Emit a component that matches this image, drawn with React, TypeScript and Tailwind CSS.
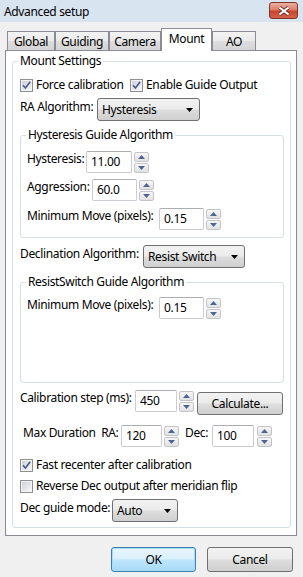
import React from 'react';

const btnBg = 'bg-[linear-gradient(#f2f2f2_0%,#ebebeb_48%,#dddddd_52%,#cfcfcf_100%)]';

const CheckBox: React.FC<{ checked?: boolean }> = ({ checked }) => (
  <svg width="13" height="13" viewBox="0 0 13 13" className="shrink-0">
    <defs>
      <linearGradient id="cbfill" x1="0" y1="0" x2="1" y2="1">
        <stop offset="0" stopColor="#cdd1d7" />
        <stop offset="1" stopColor="#f7f7f8" />
      </linearGradient>
    </defs>
    <rect x="0.5" y="0.5" width="12" height="12" fill="#f4f4f4" stroke="#8e8f8f" />
    <rect x="2" y="2" width="9" height="9" fill="url(#cbfill)" />
    {checked && <path d="M3 6.3 L5.4 9 L10.2 2.8" fill="none" stroke="#4a5d8f" strokeWidth="1.7" />}
  </svg>
);

const SpinBtn: React.FC<{ up?: boolean }> = ({ up }) => (
  <div className="w-[15px] h-[10px] border border-[#c2c4c8] rounded-[2px] bg-linear-to-b from-[#f6f6f6] to-[#e2e2e2] flex items-center justify-center">
    <svg width="7" height="4" viewBox="0 0 7 4">
      <path d={up ? 'M0 4 L3.5 0 L7 4Z' : 'M0 0 L7 0 L3.5 4Z'} fill="#4d6590" />
    </svg>
  </div>
);

const Spin: React.FC<{ className?: string }> = ({ className = '' }) => (
  <div className={`flex flex-col gap-[1px] shrink-0 ${className}`}>
    <SpinBtn up />
    <SpinBtn />
  </div>
);

const Field: React.FC<{ value: string; className: string }> = ({ value, className }) => (
  <div className={`h-[22px] border border-[#c9ccd2] border-t-[#abadb3] rounded-[2px] bg-white flex items-center pl-[4px] shrink-0 ${className}`}>
    {value}
  </div>
);

const Combo: React.FC<{ value: string; className: string }> = ({ value, className }) => (
  <div className={`h-[23px] border border-[#707070] rounded-[3px] ${btnBg} flex items-center pl-[4px] pr-[6px] shrink-0 ${className}`}>
    <span className="flex-1">{value}</span>
    <svg width="7" height="4" viewBox="0 0 7 4">
      <path d="M0 0 L7 0 L3.5 4Z" fill="#000" />
    </svg>
  </div>
);

const Group: React.FC<{ title: string; className: string; children: React.ReactNode }> = ({ title, className, children }) => (
  <div className={`relative border border-[#d5dfe5] rounded-[3px] flex flex-col shrink-0 ${className}`}>
    <span className="absolute -top-[9px] left-[5px] bg-white px-[2px] leading-[16px]">{title}</span>
    {children}
  </div>
);

const Label: React.FC<{ text: string; className: string }> = ({ text, className }) => (
  <span className={`leading-[16px] whitespace-nowrap shrink-0 ${className}`}>{text}</span>
);

const tabs = [
  { name: 'Global', w: 'w-[48px]' },
  { name: 'Guiding', w: 'w-[54px]' },
  { name: 'Camera', w: 'w-[52px]' },
  { name: 'Mount', w: 'w-[51px]', active: true },
  { name: 'AO', w: 'w-[44px]' },
];

export default function App() {
  return (
    <div className="w-[303px] h-[577px] bg-[#f0f0f0] flex flex-col text-[12px] tracking-[-0.35px] text-black font-['Noto_Sans',sans-serif] overflow-hidden">
      {/* title bar */}
      <div className="h-[22px] bg-[#d9e4f1] flex items-start justify-between shrink-0">
        <span className="pl-[4px] pt-[4px] leading-[16px]">Advanced setup</span>
        <div className="mt-[2px] mr-[5px] w-[29px] h-[17px] rounded-[3px] border border-[#7e3426] bg-[linear-gradient(#eab0a2_0%,#dc7f6b_45%,#c9452c_55%,#d2624a_100%)] flex items-center justify-center">
          <svg width="14" height="10" viewBox="0 0 14 10">
            <path d="M2.5 1.5 L11.5 8.5 M11.5 1.5 L2.5 8.5" stroke="#6b2a1f" strokeWidth="3.8" />
            <path d="M2.5 1.5 L11.5 8.5 M11.5 1.5 L2.5 8.5" stroke="#ffffff" strokeWidth="2.2" />
          </svg>
        </div>
      </div>

      {/* tabs */}
      <div className="mt-[6px] ml-[7px] h-[23px] flex items-end -mb-[1px] relative z-10 shrink-0">
        {tabs.map((t) =>
          t.active ? (
            <div key={t.name} className={`${t.w} h-[23px] bg-white border border-b-0 border-[#898c95] flex justify-center pt-[2px] leading-[16px]`}>
              {t.name}
            </div>
          ) : (
            <div key={t.name} className={`${t.w} h-[19px] mb-[1px] border border-b-0 border-[#898c95] bg-[linear-gradient(#f3f3f3_0%,#ebebeb_50%,#dedede_50%,#d4d4d4_100%)] flex justify-center pt-[2px] leading-[16px]`}>
              {t.name}
            </div>
          )
        )}
      </div>

      {/* tab page */}
      <div className="ml-[5px] w-[292px] h-[486px] border border-[#898c95] bg-white shrink-0 flex flex-col">
        <Group title="Mount Settings" className="mt-[10px] ml-[6px] w-[279px] h-[467px] pl-[7px]">
          <div className="mt-[15px] h-[16px] flex items-center">
            <CheckBox checked />
            <span className="ml-[3px] w-[94px] whitespace-nowrap">Force calibration</span>
            <CheckBox checked />
            <span className="ml-[3px] whitespace-nowrap">Enable Guide Output</span>
          </div>

          <div className="mt-[5px] flex items-start">
            <Label text="RA Algorithm:" className="w-[77px] mt-[1px]" />
            <Combo value="Hysteresis" className="w-[103px]" />
          </div>

          <Group title="Hysteresis Guide Algorithm" className="mt-[14px] w-[264px] h-[103px] pl-[6px]">
            <div className="mt-[15px] flex items-start">
              <Label text="Hysteresis:" className="w-[59px]" />
              <Field value="11.00" className="w-[46px]" />
              <Spin className="ml-[2px] mt-[1px]" />
            </div>
            <div className="mt-[6px] flex items-start">
              <Label text="Aggression:" className="w-[65px]" />
              <Field value="60.0" className="w-[45px]" />
              <Spin className="ml-[2px] mt-[1px]" />
            </div>
            <div className="mt-[7px] flex items-start">
              <Label text="Minimum Move (pixels):" className="w-[132px]" />
              <Field value="0.15" className="w-[45px]" />
              <Spin className="ml-[2px] mt-[1px]" />
            </div>
          </Group>

          <div className="mt-[7px] flex items-start">
            <Label text="Declination Algorithm:" className="w-[123px] mt-[1px]" />
            <Combo value="Resist Switch" className="w-[102px]" />
          </div>

          <Group title="ResistSwitch Guide Algorithm" className="mt-[14px] w-[264px] h-[101px] pl-[6px]">
            <div className="mt-[14px] flex items-start">
              <Label text="Minimum Move (pixels):" className="w-[132px]" />
              <Field value="0.15" className="w-[45px]" />
              <Spin className="ml-[2px] mt-[1px]" />
            </div>
          </Group>

          <div className="mt-[7px] flex items-start">
            <Label text="Calibration step (ms):" className="w-[115px]" />
            <Field value="450" className="w-[42px]" />
            <Spin className="ml-[2px] mt-[1px]" />
            <div className={`ml-[3px] mt-[2px] w-[86px] h-[23px] border border-[#707070] rounded-[3px] ${btnBg} flex items-center justify-center`}>
              Calculate...
            </div>
          </div>

          <div className="mt-[10px] flex items-start">
            <Label text="Max Duration  RA:" className="ml-[3px] w-[98px] whitespace-pre" />
            <Field value="120" className="w-[41px]" />
            <Spin className="ml-[2px] mt-[1px]" />
            <Label text="Dec:" className="ml-[6px] w-[27px]" />
            <Field value="100" className="w-[42px]" />
            <Spin className="ml-[3px] mt-[1px]" />
          </div>

          <div className="mt-[10px] h-[16px] flex items-center">
            <CheckBox checked />
            <span className="ml-[3px] whitespace-nowrap">Fast recenter after calibration</span>
          </div>
          <div className="mt-[5px] h-[16px] flex items-center">
            <CheckBox />
            <span className="ml-[3px] whitespace-nowrap">Reverse Dec output after meridian flip</span>
          </div>

          <div className="mt-[5px] flex items-start">
            <Label text="Dec guide mode:" className="w-[92px] mt-[1px]" />
            <Combo value="Auto" className="w-[66px]" />
          </div>
        </Group>
      </div>

      {/* dialog buttons */}
      <div className="mt-[11px] flex justify-end gap-[11px] pr-[10px] shrink-0">
        <div className="w-[85px] h-[25px] rounded-[3px] border border-[#3c7fb1] shadow-[inset_0_0_0_1px_#a6dcf5] bg-[linear-gradient(#eaf6fd_0%,#d9f0fc_48%,#bee6fd_52%,#a7d9f5_100%)] flex items-center justify-center">
          OK
        </div>
        <div className={`w-[86px] h-[25px] rounded-[3px] border border-[#707070] ${btnBg} flex items-center justify-center`}>
          Cancel
        </div>
      </div>
    </div>
  );
}
